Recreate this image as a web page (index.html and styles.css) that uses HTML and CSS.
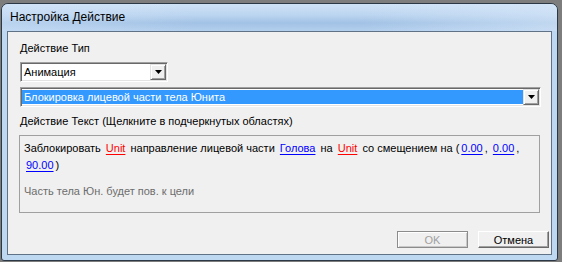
FILE: index.html
```html
<!DOCTYPE html>
<html lang="ru">
<head>
    <meta charset="UTF-8">
    <title>Настройка Действие</title>
    <link rel="stylesheet" href="styles.css">
</head>
<body>
    <div class="window">
        <div class="titlebar">Настройка Действие</div>

        <div class="client">
            <div class="field-label">Действие Тип</div>
            <div class="combo combo-type">
                <span class="combo-value">Анимация</span>
                <span class="combo-btn">
                    <svg width="7" height="4" viewBox="0 0 7 4"><polygon points="0,0 7,0 3.5,4" fill="#000"/></svg>
                </span>
            </div>

            <div class="combo combo-action">
                <span class="combo-value selected">Блокировка лицевой части тела Юнита</span>
                <span class="combo-btn">
                    <svg width="7" height="4" viewBox="0 0 7 4"><polygon points="0,0 7,0 3.5,4" fill="#000"/></svg>
                </span>
            </div>

            <div class="field-label label-text">Действие Текст (Щелкните в подчеркнутых областях)</div>
            <div class="text-box">
                <p class="action-text">Заблокировать <a class="link red">Unit</a> направление лицевой части <a class="link">Голова</a> на <a class="link red">Unit</a> со смещением на (<a class="link">0.00</a>, <a class="link">0.00</a>, <a class="link">90.00</a>)</p>
                <p class="hint">Часть тела Юн. будет пов. к цели</p>
            </div>

            <div class="buttons">
                <button class="btn" disabled>OK</button>
                <button class="btn">Отмена</button>
            </div>
        </div>
    </div>
</body>
</html>
```

FILE: styles.css
```css
body {
    margin: 0;
    background: #7d7d7d;
    font-family: "Liberation Sans", Arial, sans-serif;
    font-size: 11px;
    color: #000;
}

.window {
    margin: 3px 0 0 1px;
    width: 557px;
    height: 258px;
    box-sizing: border-box;
    border: 1px solid #2c3845;
    border-radius: 7px 7px 3px 3px;
    background: #bfd8f2;
    display: flex;
    flex-direction: column;
}

.titlebar {
    height: 27px;
    line-height: 26px;
    padding-left: 8px;
    font-size: 12px;
    border-radius: 6px 6px 0 0;
    background:
        linear-gradient(to right, rgba(210, 228, 248, 0.5), rgba(170, 200, 232, 0) 35%, rgba(170, 200, 232, 0) 65%, rgba(214, 230, 248, 0.6)),
        linear-gradient(to bottom, #cfe2f6 0%, #bcd5f0 40%, #a2c2e5 70%, #b3cfee 100%);
}

.client {
    flex: 1;
    margin: 0 5px 5px;
    border: 1px solid #5f7286;
    background: #f0f0f0;
    padding: 10px 0 6px 12px;
    display: flex;
    flex-direction: column;
    align-items: flex-start;
}

.field-label {
    line-height: 13px;
}

.combo {
    display: flex;
    height: 20px;
    box-sizing: border-box;
    border: 1px solid;
    border-color: #a0a0a0 #fff #fff #a0a0a0;
    box-shadow: inset 1px 1px #696969, inset -1px -1px #e3e3e3;
    background: #fff;
    padding: 1px;
}

.combo-type {
    margin-top: 7px;
    width: 148px;
}

.combo-action {
    margin-top: 5px;
    width: 521px;
}

.combo-value {
    flex: 1;
    line-height: 14px;
    padding-left: 2px;
    margin: 1px 0;
}

.combo-value.selected {
    background: #3399ff;
    color: #fff;
}

.combo-btn {
    width: 16px;
    box-sizing: border-box;
    border: 1px solid;
    border-color: #e3e3e3 #696969 #696969 #e3e3e3;
    box-shadow: inset 1px 1px #fff, inset -1px -1px #a0a0a0;
    background: #f0f0f0;
    display: flex;
    align-items: center;
    justify-content: center;
}

.label-text {
    margin-top: 8px;
}

.text-box {
    margin: 7px 0 0 -1px;
    width: 521px;
    height: 78px;
    box-sizing: border-box;
    border: 1px solid #a0a0a0;
    padding: 4px 4px 0;
}

.action-text {
    margin: 0;
    line-height: 17px;
}

.link {
    color: #0000ff;
    margin: 0 2px;
    text-decoration: underline;
    text-underline-offset: 2px;
}

.link.red {
    color: #ff0000;
}

.hint {
    margin: 9px 0 0;
    line-height: 17px;
    color: #6d6d6d;
}

.buttons {
    margin-top: auto;
    align-self: flex-end;
    display: flex;
    gap: 10px;
    padding-right: 2px;
}

.btn {
    width: 71px;
    height: 17px;
    padding: 0;
    font-family: inherit;
    font-size: 11px;
    background: #f0f0f0;
    border: 1px solid;
    border-color: #fff #696969 #696969 #fff;
    box-shadow: inset -1px -1px #a0a0a0;
    color: #000;
}

.btn:disabled {
    color: #a0a0a0;
    border-color: #8c8c8c;
    box-shadow: inset 1px 1px #fff, inset -1px -1px #c8c8c8;
}
```
